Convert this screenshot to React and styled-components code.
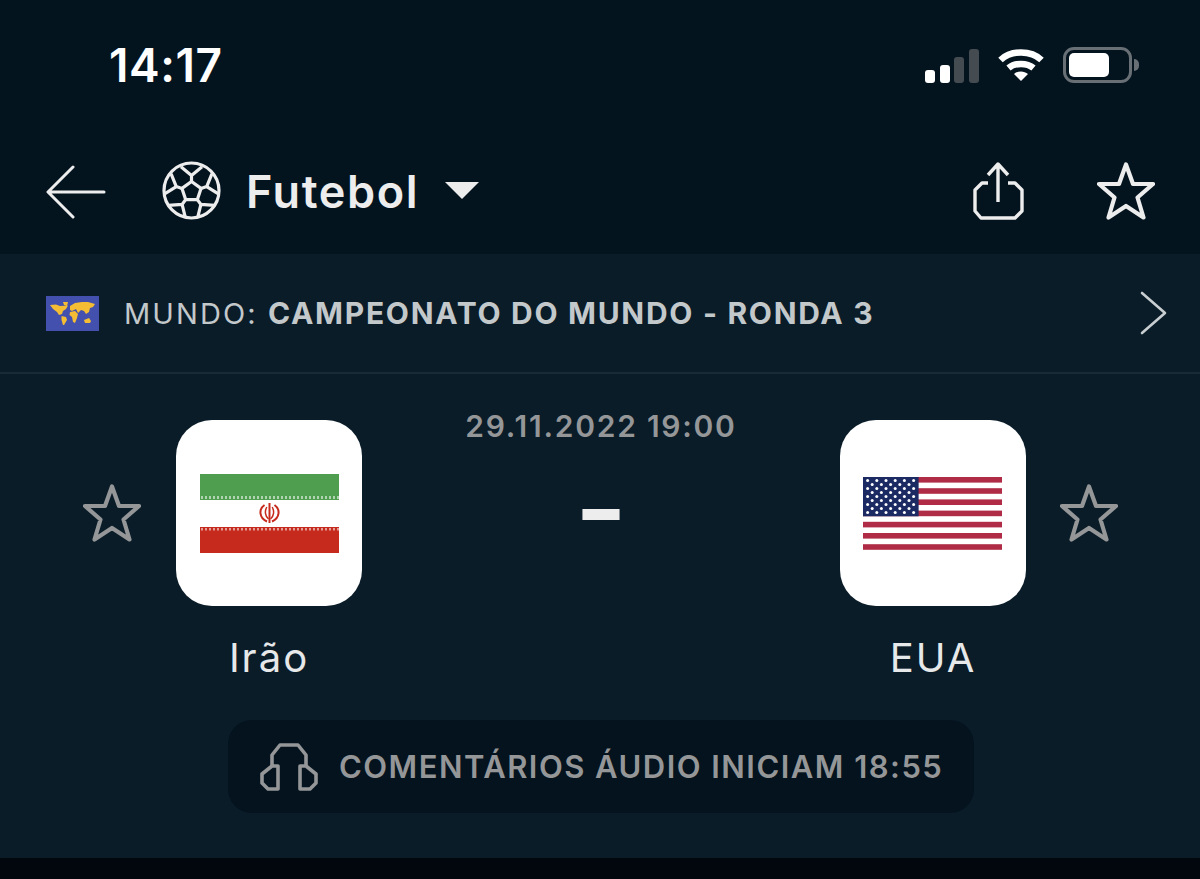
import React from "react";
import styled, { createGlobalStyle } from "styled-components";

const GlobalStyle = createGlobalStyle`
  html, body {
    margin: 0;
    padding: 0;
    background: #01070d;
  }
  * {
    box-sizing: border-box;
  }
`;

const polar = (r, deg, c = 29.5) => {
  const a = (deg - 90) * Math.PI / 180;
  return [+(c + r * Math.cos(a)).toFixed(2), +(c + 1 + r * Math.sin(a)).toFixed(2)];
};

const BallIcon = () => {
  const angles = [0, 72, 144, 216, 288];
  const inner = angles.map(a => polar(10, a));
  const mid = angles.map(a => polar(16, a));
  const lines = angles.map((a, i) => {
    const l = polar(27, a - 23);
    const r = polar(27, a + 23);
    return `M${inner[i]} L${mid[i]} M${l} L${mid[i]} L${r}`;
  });
  return (
    <svg width="59" height="59" viewBox="0 0 59 59" fill="none" stroke="#ededed" strokeWidth="3.2" strokeLinejoin="round">
      <circle cx="29.5" cy="29.5" r="27.5" />
      <polygon points={inner.join(" ")} />
      <path d={lines.join(" ")} />
    </svg>
  );
};

const StarIcon = ({ color }) => (
  <svg width="58" height="58" viewBox="0 0 58 58" fill="none" stroke={color} strokeWidth="4.2" strokeLinejoin="round">
    <path d="M29 2.5 L36 22 H56 L40.5 35.5 L46.5 55.5 L29 44 L11.5 55.5 L17.5 35.5 L2 22 H22 Z" />
  </svg>
);

const WorldFlag = () => (
  <svg width="53" height="35" viewBox="0 0 53 35">
    <rect width="53" height="35" fill="#4350ad" />
    <g fill="#f5bd34">
      <path d="M4 9 L10 8.5 L14 10 L22 9.5 L20 13 L17 15 L16 18 L13 19 L11 16 L7 13 Z" />
      <path d="M17 6 L22 6 L21 10 L18 9 Z" />
      <path d="M15.5 20 L20 21 L21 24 L18 29 L17 29 L15.5 24 Z" />
      <path d="M24 10 L29 7 L36 6 L42 6 L49 8 L47 11 L44 12 L43 16 L40 18 L38 15 L35 14 L32 17 L30 13 L26 15 L24 14 Z" />
      <path d="M24 16 L29 15 L32 18 L31 22 L29 27 L27 26 L26 21 L23.5 19 Z" />
      <path d="M38 24 L43 22 L45 25 L44 27 L39 27 Z" />
    </g>
  </svg>
);

const iranPattern = Array.from({ length: 35 }, (_, i) => i * 4);

const IranFlag = () => (
  <svg width="139" height="79" viewBox="0 0 139 79">
    <rect width="139" height="79" fill="#fff" />
    <rect width="139" height="26" fill="#4f9e4f" />
    <g fill="#fff" opacity="0.55">
      {iranPattern.map(x => <rect key={x} x={x + 1} y="22" width="2" height="3" />)}
    </g>
    <rect y="53" width="139" height="26" fill="#c62a1c" />
    <g fill="#fff" opacity="0.55">
      {iranPattern.map(x => <rect key={x} x={x + 1} y="54" width="2" height="2.5" />)}
    </g>
    <g fill="none" stroke="#c62a1c">
      <path d="M69.5 29 V49" strokeWidth="2" />
      <path d="M64.5 31 C58.5 35 59 44 67 47.5" strokeWidth="2" />
      <path d="M74.5 31 C80.5 35 80 44 72 47.5" strokeWidth="2" />
      <path d="M66.8 33 C64.5 37 65 42 68.5 45" strokeWidth="1.5" />
      <path d="M72.2 33 C74.5 37 74 42 70.5 45" strokeWidth="1.5" />
    </g>
  </svg>
);

const stripes = [0, 1, 2, 3, 4, 5, 6];
const starRows = [0, 1, 2, 3, 4, 5, 6, 7, 8];

const UsaFlag = () => (
  <svg width="139" height="73" viewBox="0 0 139 73">
    <rect width="139" height="73" fill="#fff" />
    {stripes.map(i => <rect key={i} y={i * 11.2} width="139" height="5.6" fill="#b02c46" />)}
    <rect width="55.6" height="39.3" fill="#1b2a63" />
    <g fill="#fff">
      {starRows.map(r =>
        Array.from({ length: r % 2 === 0 ? 6 : 5 }, (_, c) => (
          <circle key={`${r}-${c}`} cx={(r % 2 === 0 ? 4.6 : 9.2) + c * 9.2} cy={3.6 + r * 4} r="1.5" />
        ))
      )}
    </g>
  </svg>
);

const App = () => (
  <Page>
    <GlobalStyle />
    <Top>
      <StatusBar>
        <Clock>14:17</Clock>
        <StatusIcons>
          <Signal>
            <Bar h={13} on />
            <Bar h={18} on />
            <Bar h={26} />
            <Bar h={34} />
          </Signal>
          <svg width="46" height="34" viewBox="0 0 46 34" fill="none" stroke="#fff" strokeWidth="6.5">
            <path d="M2.5 13 C13 3 33 3 43.5 13" />
            <path d="M10.5 21 C17 15.5 29 15.5 35.5 21" />
            <path d="M16 27 L23 34 L30 27 C26 23.5 20 23.5 16 27 Z" fill="#fff" stroke="none" />
          </svg>
          <Battery>
            <BatteryFill />
            <BatteryNub />
          </Battery>
        </StatusIcons>
      </StatusBar>
      <NavBar>
        <NavLeft>
          <svg width="60" height="56" viewBox="0 0 60 56" fill="none" stroke="#ededed" strokeWidth="3" strokeLinecap="round" strokeLinejoin="round">
            <path d="M58 29 H3 M27 4 L2 29 L27 54" />
          </svg>
          <Sport>
            <BallIcon />
            <SportName>Futebol</SportName>
            <Caret />
          </Sport>
        </NavLeft>
        <NavRight>
          <svg width="52" height="58" viewBox="0 0 52 58" fill="none" stroke="#ededed" strokeWidth="3.4" strokeLinejoin="round">
            <path d="M15 21 H9 L2 28 V49 L8 56 H42 L49 49 V28 L42 21 H35" />
            <path d="M25 40 V2 M15 13 L25 2 L35 13" />
          </svg>
          <StarIcon color="#ededed" />
        </NavRight>
      </NavBar>
    </Top>
    <LeagueRow>
      <LeagueInfo>
        <WorldFlag />
        <LeagueName>MUNDO: <strong>CAMPEONATO DO MUNDO - RONDA 3</strong></LeagueName>
      </LeagueInfo>
      <svg width="27" height="44" viewBox="0 0 27 44" fill="none" stroke="#c9ced1" strokeWidth="2.6" strokeLinecap="round" strokeLinejoin="round">
        <path d="M2 2 L25 22 L2 42" />
      </svg>
    </LeagueRow>
    <Match>
      <Scoreboard>
        <Team $gap={35}>
          <TeamStar><StarIcon color="#949698" /></TeamStar>
          <TeamInfo>
            <Badge><IranFlag /></Badge>
            <TeamName>Irão</TeamName>
          </TeamInfo>
        </Team>
        <Center>
          <DateText>29.11.2022 19:00</DateText>
          <Score>–</Score>
        </Center>
        <Team $gap={34}>
          <TeamInfo>
            <Badge><UsaFlag /></Badge>
            <TeamName>EUA</TeamName>
          </TeamInfo>
          <TeamStar><StarIcon color="#949698" /></TeamStar>
        </Team>
      </Scoreboard>
      <AudioPill>
        <svg width="58" height="48" viewBox="0 0 58 48" fill="none" stroke="#949698" strokeWidth="3.6" strokeLinejoin="round">
          <path d="M18 23 H12 L2 31 V40 L8 46 H18 Z" />
          <path d="M40 23 H46 L56 31 V40 L50 46 H40 Z" />
          <path d="M12 23 V12 L20 2 H38 L46 12 V23" />
        </svg>
        <AudioText>COMENTÁRIOS ÁUDIO INICIAM 18:55</AudioText>
      </AudioPill>
    </Match>
    <BottomStrip />
  </Page>
);

export default App;

const Page = styled.div`
  width: 1200px;
  height: 879px;
  display: flex;
  flex-direction: column;
  overflow: hidden;
  font-family: Inter, "Liberation Sans", sans-serif;
`;

const Top = styled.header`
  height: 254px;
  background: #04141f;
  display: flex;
  flex-direction: column;
`;

const StatusBar = styled.div`
  height: 130px;
  padding: 47px 68px 0 109px;
  display: flex;
  justify-content: space-between;
  align-items: flex-start;
`;

const Clock = styled.span`
  color: #fff;
  font-size: 46px;
  font-weight: 600;
  line-height: 36px;
  letter-spacing: 0.6px;
`;

const StatusIcons = styled.div`
  display: flex;
  align-items: flex-start;
  gap: 19px;
`;

const Signal = styled.div`
  width: 54px;
  height: 35px;
  margin-top: 1px;
  display: flex;
  align-items: flex-end;
  justify-content: space-between;
`;

const Bar = styled.span`
  width: 10px;
  height: ${p => p.h}px;
  border-radius: 3px;
  background: ${p => (p.on ? "#fff" : "#444c52")};
`;

const Battery = styled.div`
  position: relative;
  width: 69px;
  height: 36px;
  padding: 3px;
  border: 3px solid #687075;
  border-radius: 11px;
`;

const BatteryFill = styled.div`
  width: 40px;
  height: 24px;
  border-radius: 5px;
  background: #fff;
`;

const BatteryNub = styled.div`
  position: absolute;
  right: -10px;
  top: 9px;
  width: 5px;
  height: 12px;
  background: #687075;
  border-radius: 0 6px 6px 0;
`;

const NavBar = styled.nav`
  flex: 1;
  padding: 32px 45px 34px 46px;
  display: flex;
  align-items: center;
  justify-content: space-between;
`;

const NavLeft = styled.div`
  display: flex;
  align-items: center;
  gap: 56px;
`;

const Sport = styled.div`
  display: flex;
  align-items: center;
`;

const SportName = styled.span`
  margin: 1px 0 0 25px;
  color: #ededed;
  font-size: 45px;
  font-weight: 600;
  letter-spacing: 1.6px;
`;

const Caret = styled.span`
  margin-left: 26px;
  width: 0;
  height: 0;
  border-left: 17px solid transparent;
  border-right: 17px solid transparent;
  border-top: 17px solid #ededed;
`;

const NavRight = styled.div`
  display: flex;
  align-items: center;
  gap: 72px;
`;

const LeagueRow = styled.div`
  height: 120px;
  padding: 0 33px 0 46px;
  background: #0a1c28;
  border-bottom: 2px solid #182b37;
  display: flex;
  align-items: center;
  justify-content: space-between;
`;

const LeagueInfo = styled.div`
  display: flex;
  align-items: center;
  gap: 25px;
`;

const LeagueName = styled.span`
  color: #c3c8cb;
  font-size: 29px;
  font-weight: 400;
  letter-spacing: 2.1px;

  strong {
    font-size: 30px;
    font-weight: 700;
    letter-spacing: 1.7px;
  }
`;

const Match = styled.section`
  flex: 1;
  padding: 46px 0 0;
  background: #0a1c28;
  display: flex;
  flex-direction: column;
  align-items: center;
`;

const Scoreboard = styled.div`
  width: 1036px;
  padding-left: 1px;
  display: flex;
  justify-content: space-between;
`;

const Team = styled.div`
  display: flex;
  gap: ${p => p.$gap}px;
`;

const TeamStar = styled.div`
  height: 186px;
  display: flex;
  align-items: center;
`;

const TeamInfo = styled.div`
  width: 186px;
  display: flex;
  flex-direction: column;
  align-items: center;
`;

const Badge = styled.div`
  width: 186px;
  height: 186px;
  border-radius: 36px;
  background: #fff;
  display: flex;
  align-items: center;
  justify-content: center;
`;

const TeamName = styled.span`
  margin-top: 26px;
  color: #e6e8e9;
  font-size: 40px;
  line-height: 52px;
  letter-spacing: 2px;
`;

const Center = styled.div`
  display: flex;
  flex-direction: column;
  align-items: center;
`;

const DateText = styled.span`
  color: #949698;
  font-size: 30px;
  font-weight: 600;
  line-height: 12px;
  letter-spacing: 1.75px;
`;

const Score = styled.span`
  margin-top: 42px;
  color: #ededed;
  font-size: 74px;
  font-weight: 900;
  line-height: 70px;
`;

const AudioPill = styled.div`
  margin: 36px 0 0 2px;
  width: 746px;
  height: 93px;
  padding-left: 32px;
  border-radius: 24px;
  background: #04131e;
  display: flex;
  align-items: center;
  gap: 21px;
`;

const AudioText = styled.span`
  color: #949698;
  font-size: 31px;
  font-weight: 600;
  letter-spacing: 1.47px;
`;

const BottomStrip = styled.div`
  height: 21px;
  background: #01070d;
`;
